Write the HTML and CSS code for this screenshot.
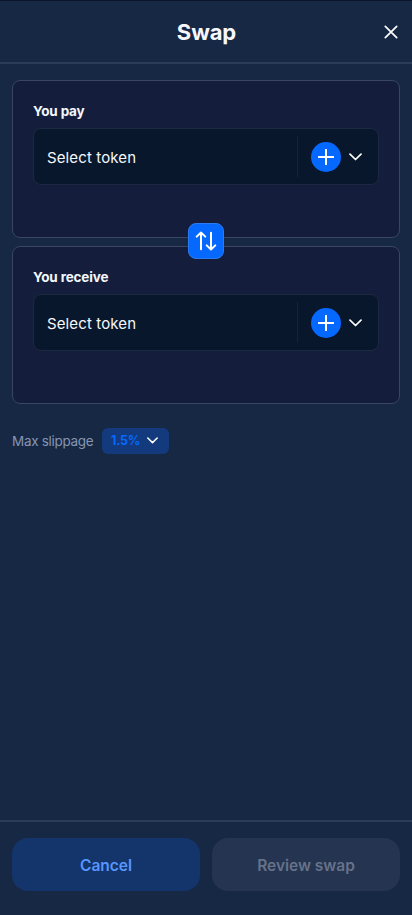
FILE: index.html
```html
<!DOCTYPE html>
<html lang="en">
<head>
<meta charset="utf-8">
<meta name="viewport" content="width=device-width, initial-scale=1">
<title>Swap</title>
<link rel="stylesheet" href="styles.css">
</head>
<body>
<header class="header">
  <h1 class="title">Swap</h1>
  <button class="close" aria-label="Close"><svg width="14" height="14" viewBox="0 0 14 14"><path d="M1.3 1.3 12.7 12.7M12.7 1.3 1.3 12.7"/></svg></button>
</header>
<main class="main">
  <section class="card">
    <h2 class="label">You pay</h2>
    <div class="select">
      <span class="placeholder">Select token</span>
      <span class="picker">
        <span class="plus"><svg width="16" height="16" viewBox="0 0 16 16"><path d="M8 .8v14.4M.8 8h14.4"/></svg></span>
        <svg class="chevron" width="13" height="8" viewBox="0 0 13 8"><path d="M1 1.2 6.5 6.5 12 1.2"/></svg>
      </span>
    </div>
    <button class="switch" aria-label="Switch tokens"><svg width="22" height="20" viewBox="0 0 22 20"><path d="M6 18.2V1.8M1.7 5.6 6 1.5 10.3 5.6M16 1.8v16.4M11.7 14.4l4.3 4.1 4.3-4.1"/></svg></button>
  </section>
  <section class="card">
    <h2 class="label">You receive</h2>
    <div class="select">
      <span class="placeholder">Select token</span>
      <span class="picker">
        <span class="plus"><svg width="16" height="16" viewBox="0 0 16 16"><path d="M8 .8v14.4M.8 8h14.4"/></svg></span>
        <svg class="chevron" width="13" height="8" viewBox="0 0 13 8"><path d="M1 1.2 6.5 6.5 12 1.2"/></svg>
      </span>
    </div>
  </section>
  <div class="slippage">
    <span class="slippage-label">Max slippage</span>
    <button class="slippage-value"><span>1.5%</span><svg class="chevron" width="11" height="7" viewBox="0 0 11 7"><path d="M.8 1 5.5 5.6 10.2 1"/></svg></button>
  </div>
</main>
<footer class="footer">
  <button class="button cancel">Cancel</button>
  <button class="button review" disabled>Review swap</button>
</footer>
</body>
</html>
```
FILE: styles.css
```css
* { box-sizing: border-box; }
body {
  margin: 0;
  height: 915px;
  display: flex;
  flex-direction: column;
  overflow: hidden;
  border-top: 1px solid #0b1628;
  background: #172845;
  color: #f5f7fc;
  font-family: Inter, "Liberation Sans", sans-serif;
}
button { border: 0; padding: 0; font: inherit; color: inherit; background: none; }
h1, h2 { margin: 0; }
svg { display: block; fill: none; stroke: #fff; stroke-width: 1.7; stroke-linecap: round; stroke-linejoin: round; }
.header {
  height: 63px;
  flex: none;
  display: grid;
  grid-template-columns: 28px 1fr 28px;
  align-items: center;
  border-bottom: 2px solid #2c3b57;
}
.title { grid-column: 2; text-align: center; font-size: 22px; line-height: 28px; font-weight: 700; letter-spacing: -0.1px; padding-left: 1px; }
.close { justify-self: start; }
.main { flex: 1; padding: 15.5px 12px 16px; display: flex; flex-direction: column; }
.card {
  position: relative;
  height: 158px;
  margin-bottom: 8px;
  padding: 20px 20px 0;
  border: 1px solid #3a4560;
  border-radius: 8px;
  background: #141e3c;
}
.label { font-size: 13.5px; line-height: 20px; font-weight: 700; letter-spacing: -0.16px; margin-bottom: 7px; }
.select {
  height: 57px;
  display: flex;
  align-items: center;
  border: 1px solid #1b2a40;
  border-radius: 8px;
  background: #09172d;
}
.placeholder { flex: 1; padding: 3px 0 0 13px; font-size: 15px; line-height: 22px; letter-spacing: 0.12px; }
.picker {
  width: 81px;
  height: 41px;
  padding: 1px 0 0 13px;
  display: flex;
  align-items: center;
  gap: 8px;
  border-left: 1px solid #14243b;
}
.plus {
  width: 30px;
  height: 30px;
  display: grid;
  place-items: center;
  border-radius: 50%;
  background: #0568ff;
}
.plus svg, .switch svg { stroke-width: 2; }
.switch {
  position: absolute;
  z-index: 1;
  left: 175px;
  top: 142.5px;
  width: 36px;
  height: 36px;
  display: grid;
  place-items: center;
  border: 1px solid #2b7aef;
  border-radius: 8px;
  background: #0568ff;
}
.slippage { display: flex; align-items: center; gap: 8px; margin-top: 16px; height: 26px; }
.slippage-label { width: 82px; white-space: nowrap; font-size: 13.5px; letter-spacing: -0.3px; color: #8595b2; }
.slippage-value {
  width: 67px;
  height: 26px;
  padding: 0 11px 0 9px;
  display: flex;
  align-items: center;
  justify-content: space-between;
  border-radius: 6px;
  background: #123a7d;
  color: #0568ff;
  font-size: 12.5px;
  font-weight: 700;
  letter-spacing: -0.25px;
}
.slippage-value svg { stroke-width: 1.5; }
.footer {
  height: 95px;
  flex: none;
  padding: 16px 12px 24px;
  display: grid;
  grid-template-columns: 1fr 1fr;
  gap: 12px;
  border-top: 2px solid #2c3b57;
}
.button { border-radius: 16px; padding-top: 1px; font-size: 15.5px; font-weight: 600; letter-spacing: -0.02px; }
.cancel { background: #14356b; color: #5796ff; }
.review { background: #253450; color: #66728a; }
```
